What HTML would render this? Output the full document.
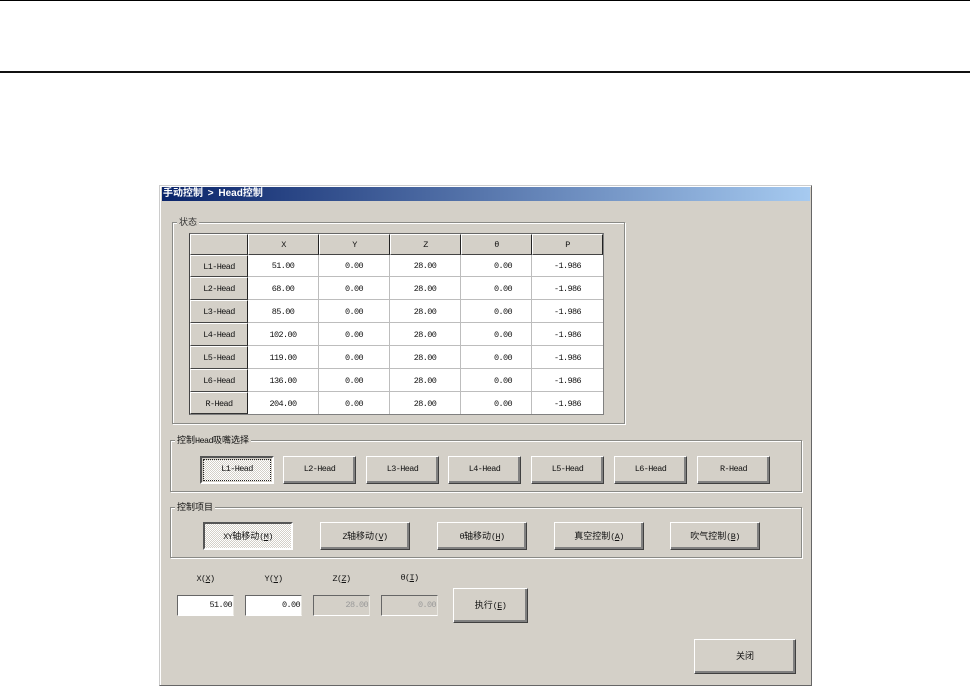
<!DOCTYPE html>
<html><head><meta charset="utf-8">
<style>
html,body{margin:0;padding:0;background:#fff;}
#p{position:relative;width:970px;height:686px;overflow:hidden;background:#fff;font-family:"Liberation Mono","Noto Sans CJK SC",monospace;font-size:8.5px;letter-spacing:-.6px;color:#111;}
#p div{position:absolute;box-sizing:border-box;}
.z{font-size:9px;letter-spacing:0;font-family:"Noto Sans CJK SC","WenQuanYi Zen Hei",sans-serif;}
.g{border:1px solid #8a8a86;box-shadow:1px 1px 0 #fff,inset 1px 1px 0 #fff;}
.l{background:#d4d0c8;height:12px;line-height:12px;white-space:nowrap;padding:0 2px;}
.b{background:#d4d0c8;border-top:1px solid #fff;border-left:1px solid #fff;border-right:1px solid #404040;border-bottom:1px solid #404040;box-shadow:inset -1px -1px 0 #808080,inset -2px -2px 0 #808080;text-align:center;white-space:nowrap;line-height:25px;height:28px;}
.h35{height:35px;line-height:32px;}
.c{background-color:#d4d0c8;background-image:conic-gradient(#fff 25%,#d4d0c8 0 50%,#fff 0 75%,#d4d0c8 0);background-size:2px 2px;text-align:center;white-space:nowrap;}
.i{background:#fff;border-top:1px solid #666;border-left:1px solid #666;border-right:1px solid #e8e6e0;border-bottom:1px solid #fff;text-align:right;padding-right:1px;line-height:19px;}
.d{background:#d4d0c8;color:#999;}
.t{text-align:center;line-height:12px;white-space:nowrap;}
table{position:absolute;left:189px;top:233px;width:415px;height:181px;border-collapse:separate;border-spacing:0;table-layout:fixed;border-top:1px solid #666;border-left:1px solid #444;border-right:1px solid #808080;border-bottom:1px solid #808080;background:#fff;font-size:8.5px;letter-spacing:-.6px;color:#111;}
td,th{padding:1px 0 0;box-sizing:border-box;text-align:center;font-weight:normal;border-right:1px solid #bdbdbd;border-bottom:1px solid #bdbdbd;}
th{background:#d4d0c8;border-top:1px solid #fff;border-left:1px solid #fff;border-right:1px solid #222;border-bottom:1px solid #444;}
tr>td:last-child{border-right:0;}
tr:last-child td{border-bottom:0;}
tr:last-child th{border-bottom:1px solid #333;}
td.o{padding-left:14px;}
</style></head>
<body><div id="p">
<div style="left:0;top:0;width:970px;height:1px;background:#000"></div>
<div style="left:0;top:71px;width:970px;height:2px;background:#111"></div>

<div style="left:159px;top:185px;width:653px;height:501px;background:#d4d0c8;border-top:1px solid #ccc;border-left:1px solid #ccc;border-right:1px solid #666;border-bottom:1px solid #666;box-shadow:inset 1px 1px 0 #fff"></div>
<div style="left:162px;top:187px;width:648px;height:14px;background:linear-gradient(90deg,#0a246a,#a6caf0);color:#fff;font:bold 10px/14px 'Liberation Sans','Noto Sans CJK SC',sans-serif;letter-spacing:0;word-spacing:2px;padding-left:1px;white-space:nowrap">手动控制 &gt; Head控制</div>

<div class="g" style="left:172px;top:222px;width:453px;height:202px"></div>
<div class="l z" style="left:177px;top:216px;color:#333">状态</div>

<table>
<colgroup><col style="width:58px"><col style="width:71px"><col style="width:71px"><col style="width:71px"><col style="width:71px"><col style="width:71px"></colgroup>
<tr style="height:21px"><th></th><th>X</th><th>Y</th><th>Z</th><th>θ</th><th>P</th></tr>
<tr style="height:22px"><th>L1-Head</th><td>51.00</td><td>0.00</td><td>28.00</td><td class="o">0.00</td><td>-1.986</td></tr>
<tr style="height:23px"><th>L2-Head</th><td>68.00</td><td>0.00</td><td>28.00</td><td class="o">0.00</td><td>-1.986</td></tr>
<tr style="height:23px"><th>L3-Head</th><td>85.00</td><td>0.00</td><td>28.00</td><td class="o">0.00</td><td>-1.986</td></tr>
<tr style="height:23px"><th>L4-Head</th><td>102.00</td><td>0.00</td><td>28.00</td><td class="o">0.00</td><td>-1.986</td></tr>
<tr style="height:23px"><th>L5-Head</th><td>119.00</td><td>0.00</td><td>28.00</td><td class="o">0.00</td><td>-1.986</td></tr>
<tr style="height:23px"><th>L6-Head</th><td>136.00</td><td>0.00</td><td>28.00</td><td class="o">0.00</td><td>-1.986</td></tr>
<tr style="height:22px"><th>R-Head</th><td>204.00</td><td>0.00</td><td>28.00</td><td class="o">0.00</td><td>-1.986</td></tr>
</table>

<div class="g" style="left:170px;top:440px;width:632px;height:52px"></div>
<div class="l" style="left:175px;top:434px"><span class="z">控制</span>Head<span class="z">吸嘴选择</span></div>
<div style="left:200px;top:456px;width:74px;height:28px;background:#d4d0c8;border:2px solid #555;border-right-color:#fff;border-bottom-color:#fff"></div>
<div class="c" style="left:203px;top:459px;width:68px;height:22px;border:1px dotted #222;line-height:19px">L1-Head</div>
<div class="b" style="left:283px;top:456px;width:73px">L2-Head</div>
<div class="b" style="left:366px;top:456px;width:73px">L3-Head</div>
<div class="b" style="left:448px;top:456px;width:73px">L4-Head</div>
<div class="b" style="left:531px;top:456px;width:73px">L5-Head</div>
<div class="b" style="left:614px;top:456px;width:73px">L6-Head</div>
<div class="b" style="left:697px;top:456px;width:73px">R-Head</div>

<div class="g" style="left:170px;top:507px;width:632px;height:51px"></div>
<div class="l z" style="left:175px;top:501px">控制项目</div>
<div class="c" style="left:203px;top:522px;width:90px;height:28px;border-top:2px solid #555;border-left:2px solid #555;border-right:2px solid #fff;border-bottom:2px solid #fff;line-height:23px">XY<span class="z">轴移动</span>(<u>M</u>)</div>
<div class="b" style="left:320px;top:522px;width:90px">Z<span class="z">轴移动</span>(<u>V</u>)</div>
<div class="b" style="left:437px;top:522px;width:90px">θ<span class="z">轴移动</span>(<u>H</u>)</div>
<div class="b" style="left:554px;top:522px;width:90px"><span class="z">真空控制</span>(<u>A</u>)</div>
<div class="b" style="left:670px;top:522px;width:90px"><span class="z">吹气控制</span>(<u>B</u>)</div>

<div class="t" style="left:177px;top:573px;width:57px">X(<u>X</u>)</div>
<div class="t" style="left:245px;top:573px;width:57px">Y(<u>Y</u>)</div>
<div class="t" style="left:313px;top:573px;width:57px">Z(<u>Z</u>)</div>
<div class="t" style="left:381px;top:572px;width:57px">θ(<u>I</u>)</div>

<div class="i" style="left:177px;top:595px;width:57px;height:21px">51.00</div>
<div class="i" style="left:245px;top:595px;width:57px;height:21px">0.00</div>
<div class="i d" style="left:313px;top:595px;width:57px;height:21px">28.00</div>
<div class="i d" style="left:381px;top:595px;width:57px;height:21px">0.00</div>

<div class="b h35" style="left:453px;top:588px;width:75px"><span class="z">执行</span>(<u>E</u>)</div>
<div class="b h35" style="left:694px;top:639px;width:102px"><span class="z">关闭</span></div>
</div></body></html>
